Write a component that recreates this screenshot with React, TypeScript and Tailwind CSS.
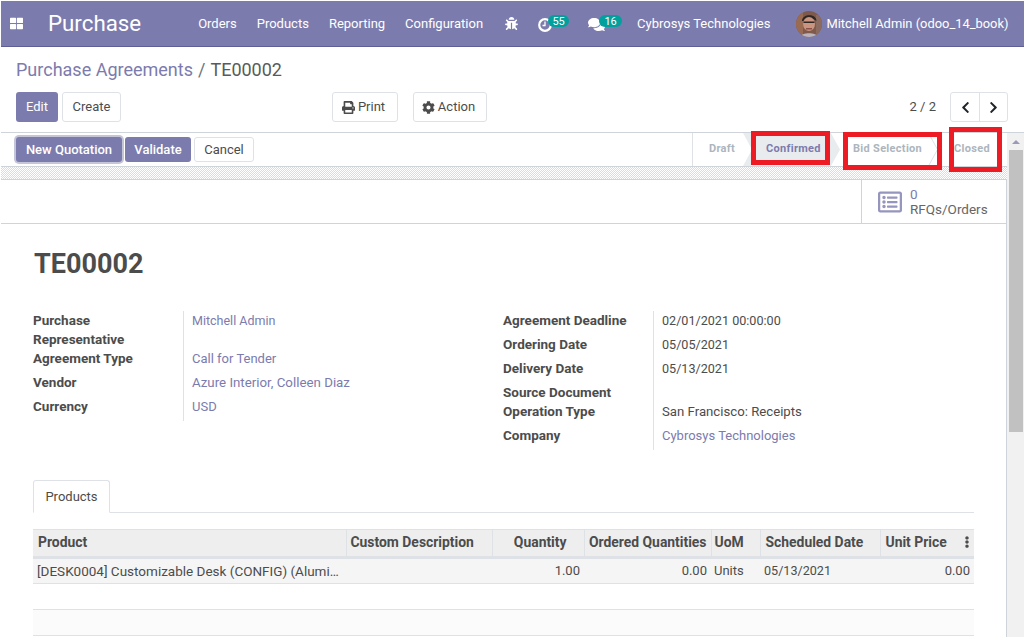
import React from "react";
import { FaThLarge, FaBug, FaComments, FaPrint, FaCog, FaChevronLeft, FaChevronRight, FaRegListAlt, FaEllipsisV } from "react-icons/fa";

function Avatar() {
  return (
    <svg width="26" height="26" viewBox="0 0 26 26" className="shrink-0">
      <defs><clipPath id="av"><circle cx="13" cy="13" r="13" /></clipPath></defs>
      <g clipPath="url(#av)">
        <rect width="26" height="26" fill="#7d5a4c" />
        <rect x="0" y="0" width="7" height="26" fill="#9a6b52" />
        <rect x="20" y="4" width="6" height="22" fill="#8b6a60" />
        <path d="M6 10 C6 3 20 2 20.500 10 L19 9 C15 7 10 7 7.500 10 Z" fill="#2c2522" />
        <ellipse cx="13" cy="13" rx="6" ry="7" fill="#c99480" />
        <rect x="7.500" y="10.500" width="11" height="1.500" fill="#2c2522" />
        <path d="M10 17 h6 v1.500 h-6 Z" fill="#8a4f45" />
        <path d="M4 26 C5 21 21 21 22 26 Z" fill="#b9b3bd" />
      </g>
    </svg>
  );
}

function ClockIcon() {
  return (
    <svg width="14" height="14" viewBox="0 0 14 14" className="mt-[2px] shrink-0">
      <circle cx="7" cy="7" r="5.800" fill="none" stroke="white" strokeWidth="2.200" />
      <path d="M7 3.500 V7.500 H4.500" fill="none" stroke="white" strokeWidth="1.300" />
    </svg>
  );
}

function Badge({ children, className }: { children: React.ReactNode; className: string }) {
  return (
    <span className={`relative flex h-[12px] items-center justify-center rounded-full bg-[#00a09d] text-[11px] leading-none text-white ${className}`}>
      {children}
    </span>
  );
}

function Btn({ children, className = "" }: { children: React.ReactNode; className?: string }) {
  return (
    <button className={`flex h-[30px] items-center justify-center gap-[3px] rounded-[3px] border border-[#dee2e6] bg-white text-[13px] text-[#4c4c4c] ${className}`}>
      {children}
    </button>
  );
}

function Primary({ children, className = "" }: { children: React.ReactNode; className?: string }) {
  return (
    <button className={`flex items-center justify-center rounded-[3px] bg-[#7c7bad] text-[13px] text-white ${className}`}>
      {children}
    </button>
  );
}

type Row = { label: string; value?: string; link?: boolean; tight?: boolean; size?: string };

const leftRows: Row[] = [
  { label: "Purchase Representative", value: "Mitchell Admin", link: true, tight: true, size: "text-[12.500px]" },
  { label: "Agreement Type", value: "Call for Tender", link: true },
  { label: "Vendor", value: "Azure Interior, Colleen Diaz", link: true, size: "text-[13.300px]" },
  { label: "Currency", value: "USD", link: true },
];

const rightRows: Row[] = [
  { label: "Agreement Deadline", value: "02/01/2021 00:00:00", size: "text-[12.600px]" },
  { label: "Ordering Date", value: "05/05/2021", size: "text-[12.600px]" },
  { label: "Delivery Date", value: "05/13/2021", size: "text-[12.600px]" },
  { label: "Source Document", tight: true },
  { label: "Operation Type", value: "San Francisco: Receipts", size: "text-[13.200px]" },
  { label: "Company", value: "Cybrosys Technologies", link: true },
];

function FieldGroup({ rows, className }: { rows: Row[]; className: string }) {
  return (
    <div className={`grid grid-cols-[150px_1fr] text-[13px] leading-[19px] ${className}`}>
      {rows.map((r) => (
        <React.Fragment key={r.label}>
          <div className={`pr-[8px] text-[13.500px] font-bold text-[#4c4c4c] ${r.tight ? "" : "pb-[5px]"}`}>{r.label}</div>
          <div className={`border-l border-[#dee2e6] pl-[8px] ${r.size ?? ""} ${r.tight ? "" : "pb-[5px]"} ${r.link ? "text-[#7c7bad]" : "text-[#4c4c4c]"}`}>
            {r.value}
          </div>
        </React.Fragment>
      ))}
    </div>
  );
}

function Th({ children, className = "" }: { children?: React.ReactNode; className?: string }) {
  return <th className={`h-[28px] border-r border-[#dee2e6] px-[4px] pb-[2px] text-[13.900px] font-bold text-[#4c4c4c] ${className}`}>{children}</th>;
}

function Td({ children, className = "" }: { children?: React.ReactNode; className?: string }) {
  return <td className={`h-[26px] truncate px-[4px] text-[#4c4c4c] ${className}`}>{children}</td>;
}

export default function App() {
  return (
    <div className="relative flex h-[637px] w-[1024px] flex-col overflow-hidden bg-white pl-px pt-px [font-family:Roboto,sans-serif]">
      <nav className="flex h-[46px] shrink-0 items-center whitespace-nowrap border-b border-[#5f5e97] bg-[#7c7bad] text-[13px] text-white">
        <FaThLarge className="ml-[9px] text-[13px]" />
        <span className="ml-[25px] text-[22.300px] leading-none">Purchase</span>
        <div className="ml-[57px] flex gap-[20px]">
          <span>Orders</span>
          <span>Products</span>
          <span>Reporting</span>
          <span>Configuration</span>
        </div>
        <FaBug className="ml-[22px] text-[13px]" />
        <div className="ml-[20px] flex items-center">
          <ClockIcon />
          <Badge className="-mt-[5px] -ml-[4px] w-[21px]">55</Badge>
        </div>
        <div className="ml-[19px] flex items-center">
          <FaComments className="mt-[2px] text-[17px]" />
          <Badge className="-mt-[5px] -ml-[6px] w-[23px]">16</Badge>
        </div>
        <span className="ml-[15px]">Cybrosys Technologies</span>
        <div className="ml-[26px]"><Avatar /></div>
        <span className="ml-[4px] text-[12.900px]">Mitchell Admin (odoo_14_book)</span>
      </nav>

      <div className="flex h-[85px] shrink-0 flex-col pl-[15px] pr-[16px]">
        <div className="mt-[11px] flex h-[23px] items-center text-[18px] leading-none">
          <span className="text-[#7c7bad]">Purchase Agreements</span>
          <span className="mx-[5px] text-[#6c757d]">/</span>
          <span className="text-[#5a5a5a]">TE00002</span>
        </div>
        <div className="mt-[11px] flex items-center">
          <Primary className="h-[30px] w-[42px]">Edit</Primary>
          <Btn className="ml-[4px] w-[59px]">Create</Btn>
          <Btn className="ml-[211px] w-[66px] pr-[3px]"><FaPrint className="text-[13px]" />Print</Btn>
          <Btn className="ml-[15px] w-[74px] pr-[3px]"><FaCog className="text-[13px]" />Action</Btn>
          <span className="ml-auto text-[13px] text-[#4c4c4c]">2 / 2</span>
          <div className="ml-[14px] flex h-[30px] rounded-[3px] border border-[#dee2e6] text-[#212529]">
            <span className="flex w-[29px] items-center justify-center border-r border-[#dee2e6]"><FaChevronLeft className="text-[13px]" /></span>
            <span className="flex w-[27px] items-center justify-center"><FaChevronRight className="text-[13px]" /></span>
          </div>
        </div>
      </div>

      <div className="flex min-h-0 flex-1">
        <div className="flex w-[1006px] flex-col overflow-hidden">
          <div className="flex h-[35px] shrink-0 items-center justify-between border-y border-[#ced4da] pl-[15px]">
            <div className="flex items-center gap-[3px]">
              <Primary className="h-[25px] w-[106px] font-medium shadow-[0_0_0_2px_#c5c5d8]">New Quotation</Primary>
              <Primary className="h-[25px] w-[66px] font-medium">Validate</Primary>
              <Btn className="!h-[25px] w-[60px]">Cancel</Btn>
            </div>
            <div className="flex h-full items-stretch text-[11px] font-bold tracking-[0.3px] text-[#adb5bd]">
              <div className="flex w-[59px] items-center border-l border-[#dee2e6] pl-[16px]">Draft</div>
              <div className="-ml-[8px] flex w-[97px] items-center bg-[#e9ecef] pl-[23px] text-[#7c7bad] [clip-path:polygon(0_0,88px_0,97px_50%,88px_100%,0_100%,9px_50%)]">Confirmed</div>
              <div className="relative flex w-[98px] items-center pl-[13px]">
                Bid Selection
                <svg width="10" height="33" viewBox="0 0 10 33" className="absolute right-0 top-0">
                  <path d="M0.500 0 L9.500 16.500 L0.500 33" fill="none" stroke="#dee2e6" />
                </svg>
              </div>
              <div className="flex w-[69px] items-center pl-[16px]">Closed</div>
            </div>
          </div>
          <div className="h-[12px] shrink-0 bg-[repeating-conic-gradient(#dcdcdc_0%_25%,#ffffff_0%_50%)] bg-[length:2px_2px]" />
          <div className="flex-1 border-t border-r border-[#ced4da]">
            <div className="flex h-[44px] justify-end border-b border-[#ced4da]">
              <div className="flex w-[145px] items-center border-l border-[#ced4da] pl-[16px]">
                <FaRegListAlt className="text-[24px] text-[#7c7bad] opacity-80" />
                <div className="ml-[8px] text-[13.500px] leading-[15px] text-[#666666]">
                  <div className="text-[#7c7bad]">0</div>
                  <div>RFQs/Orders</div>
                </div>
              </div>
            </div>

            <div className="pl-[32px] pr-[32px]">
              <h1 className="ml-px mt-[24px] text-[27px] font-bold leading-[32px] text-[#4c4c4c]">TE00002</h1>
              <div className="mt-[31px] flex h-[139px]">
                <FieldGroup rows={leftRows} className="w-[470px] content-start" />
                <FieldGroup rows={rightRows} className="flex-1 content-start" />
              </div>

              <div className="mt-[30px] flex h-[33px] border-b border-[#dee2e6]">
                <div className="flex h-[33px] w-[77px] items-center justify-center rounded-t-[3px] border border-[#dee2e6] border-b-white bg-white text-[13px] text-[#4c4c4c]">Products</div>
              </div>

              <table className="mt-[16px] w-[941px] table-fixed border-collapse">
                <colgroup>
                  <col className="w-[313px]" />
                  <col className="w-[146px]" />
                  <col className="w-[92px]" />
                  <col className="w-[127px]" />
                  <col className="w-[49px]" />
                  <col className="w-[120px]" />
                  <col className="w-[94px]" />
                </colgroup>
                <thead>
                  <tr className="border-t border-b-[3px] border-[#dee2e6] bg-[#eeeeee]">
                    <Th className="!pl-[5px] text-left">Product</Th>
                    <Th className="text-left">Custom Description</Th>
                    <Th className="!pr-[17px] text-right">Quantity</Th>
                    <Th className="whitespace-nowrap text-right">Ordered Quantities</Th>
                    <Th className="!pl-[3px] text-left">UoM</Th>
                    <Th className="!pl-[5px] text-left">Scheduled Date</Th>
                    <Th className="!pl-[5px] !pr-[1px] border-r-0 text-left">
                      <div className="flex items-center justify-between">Unit Price<FaEllipsisV className="text-[12px]" /></div>
                    </Th>
                  </tr>
                </thead>
                <tbody>
                  <tr className="border-b border-[#dee2e6] bg-[#f5f5f5]">
                    <Td className="text-[13.500px]">[DESK0004] Customizable Desk (CONFIG) (Aluminium, White)</Td>
                    <Td />
                    <Td className="text-right text-[13px]">1.00</Td>
                    <Td className="text-right text-[13px]">0.00</Td>
                    <Td className="!pl-[3px] text-[13px]">Units</Td>
                    <Td className="text-[12.600px]">05/13/2021</Td>
                    <Td className="text-right text-[13px]">0.00</Td>
                  </tr>
                  <tr className="border-b border-[#dee2e6]"><td colSpan={7} className="h-[26px]" /></tr>
                  <tr className="border-b border-[#dee2e6] bg-[#fbfbfb]"><td colSpan={7} className="h-[26px]" /></tr>
                </tbody>
              </table>
            </div>
          </div>
        </div>

        <div className="flex w-[17px] flex-col items-center border-t border-[#ced4da] bg-[#f1f1f1]">
          <div className="mt-[7px] h-0 w-0 border-x-[4px] border-b-[4px] border-x-transparent border-b-[#9a99b8]" />
          <div className="mt-[6px] h-[282px] w-[14px] bg-[#c1c1c1]" />
        </div>
      </div>

      <div className="absolute left-[751px] top-[131px] h-[34px] w-[79px] border-[5px] border-[#ed1c24]" />
      <div className="absolute left-[843px] top-[132px] h-[38px] w-[99px] border-[5px] border-[#ed1c24]" />
      <div className="absolute left-[949px] top-[127px] h-[45px] w-[53px] border-[5px] border-[#ed1c24]" />
    </div>
  );
}
